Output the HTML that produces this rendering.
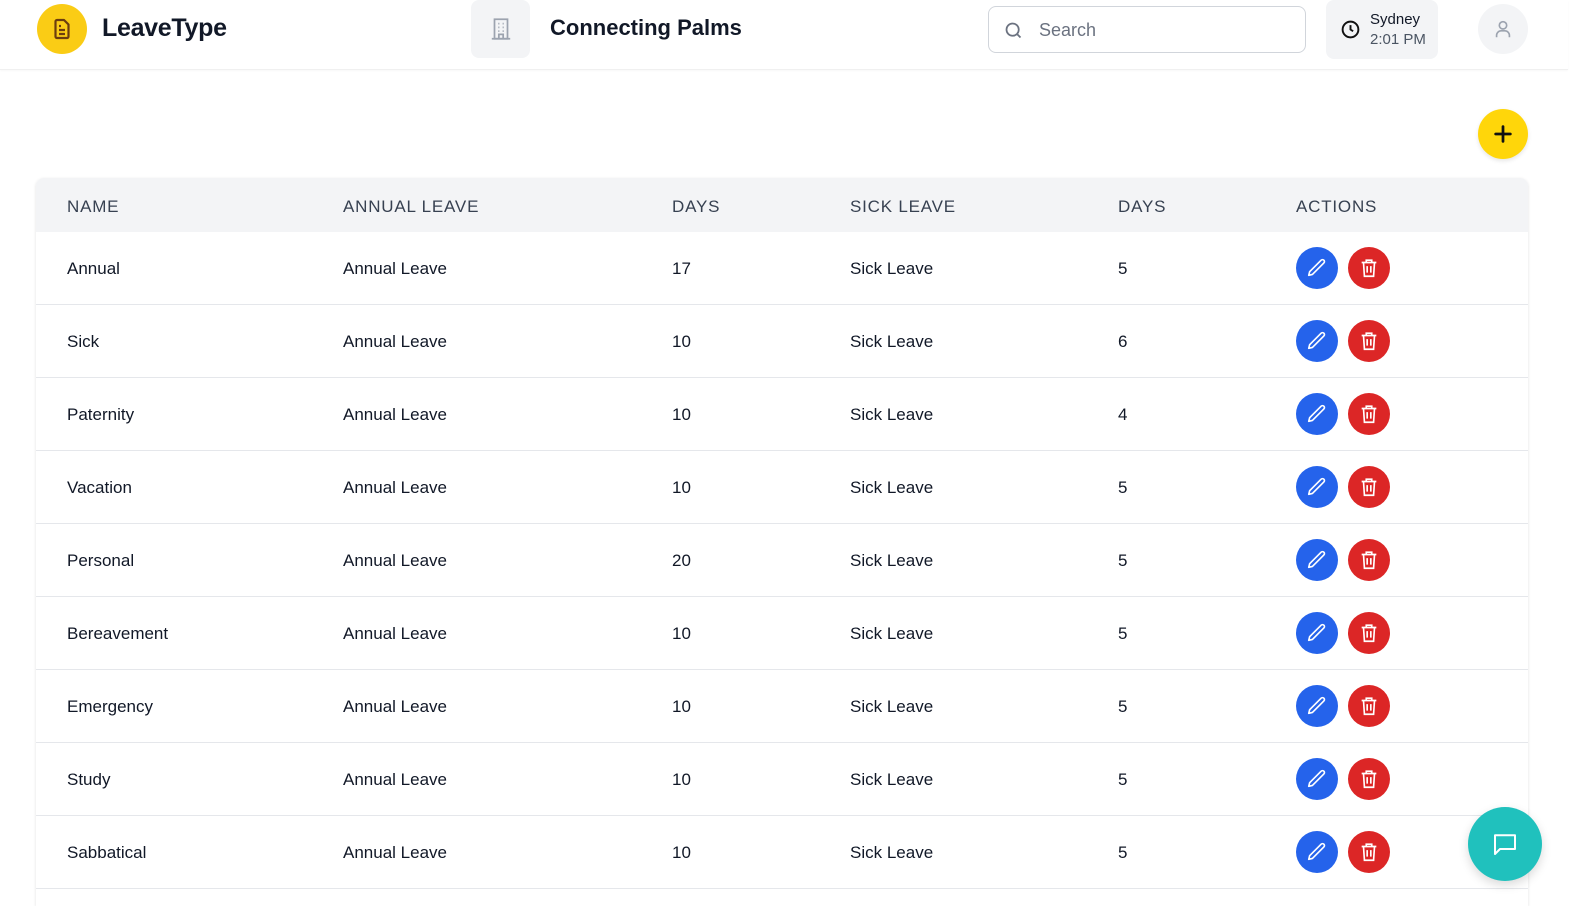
<!DOCTYPE html>
<html><head><meta charset="utf-8">
<style>
*{box-sizing:border-box;margin:0;padding:0}
html,body{width:1579px;height:906px;overflow:hidden}
body{background:#fff;font-family:"Liberation Sans",sans-serif;color:#111827;position:relative}
.top{position:absolute;left:0;top:0;width:1568px;height:70px;border-bottom:1px solid #f0f0f0;box-shadow:0 1px 2px rgba(0,0,0,.03)}
.abs{position:absolute}
.logo{left:37px;top:4px;width:50px;height:50px;border-radius:50%;background:#facc15;display:flex;align-items:center;justify-content:center}
.title{left:102px;top:14px;font-size:25px;font-weight:bold;letter-spacing:-0.3px}
.bld{left:471px;top:0;width:59px;height:58px;border-radius:8px;background:#f3f4f6;display:flex;align-items:center;justify-content:center}
.org{left:550px;top:15px;font-size:22px;font-weight:bold}
.search{left:988px;top:6px;width:318px;height:47px;border:1px solid #d1d5db;border-radius:8px}
.search span{position:absolute;left:50px;top:13px;font-size:18px;color:#6b7280}
.tz{left:1326px;top:0;width:112px;height:59px;border-radius:8px;background:#f3f4f6}
.av{left:1478px;top:4px;width:50px;height:50px;border-radius:50%;background:#f3f4f6;display:flex;align-items:center;justify-content:center}
.add{left:1478px;top:109px;width:50px;height:50px;border-radius:50%;background:#ffd60a;display:flex;align-items:center;justify-content:center;box-shadow:0 2px 4px rgba(0,0,0,.1)}
.tbl{left:36px;top:178px;width:1492px;height:728px;border-radius:8px 8px 0 0;box-shadow:0 1px 3px rgba(0,0,0,.12);overflow:hidden;background:#fff}
.hd{height:54px;background:#f3f4f6;position:relative}
.hd div{position:absolute;top:19px;font-size:17px;color:#374151;letter-spacing:.8px}
.row{height:73px;border-bottom:1px solid #e5e7eb;position:relative}
.row div.c{position:absolute;top:27px;font-size:17px;color:#111827}
.b{position:absolute;top:15px;width:42px;height:42px;border-radius:50%;display:flex;align-items:center;justify-content:center}
.e{left:1260px;background:#2563eb}
.d{left:1312px;background:#dc2626}
.chat{left:1468px;top:807px;width:74px;height:74px;border-radius:50%;background:#20c1bd;display:flex;align-items:center;justify-content:center;box-shadow:0 4px 10px rgba(0,0,0,.15)}
</style></head><body>
<div class="top">
<div class="abs logo"><svg width="24" height="24" viewBox="0 0 24 24" fill="none" stroke="#6b3d0f" stroke-width="2.2" stroke-linejoin="round"><path d="M14 3H7a1.5 1.5 0 0 0-1.5 1.5v15A1.5 1.5 0 0 0 7 21h10a1.5 1.5 0 0 0 1.5-1.5V7.5z"/><path d="M9 9h2M9 13h6M9 17h6"/></svg></div>
<div class="abs title">LeaveType</div>
<div class="abs bld"><svg width="26" height="26" viewBox="0 0 24 24" fill="none" stroke="#9ca3af" stroke-width="1.6"><rect x="6" y="3" width="12" height="18"/><path d="M3.5 21h17M10 21v-4h4v4M9.5 7h1M13.5 7h1M9.5 10.5h1M13.5 10.5h1M9.5 14h1M13.5 14h1"/></svg></div>
<div class="abs org">Connecting Palms</div>
<div class="abs search"><svg style="position:absolute;left:14px;top:13px" width="21" height="21" viewBox="0 0 24 24" fill="none" stroke="#6b7280" stroke-width="2"><circle cx="11" cy="11" r="7"/><path d="M20 20l-4-4"/></svg><span>Search</span></div>
<div class="abs tz"><svg style="position:absolute;left:14px;top:19px" width="21" height="21" viewBox="0 0 24 24" fill="none" stroke="#111" stroke-width="2.2"><circle cx="12" cy="12" r="9"/><path d="M12 7v5l3 2"/></svg><div style="position:absolute;left:44px;top:11px;font-size:15px">Sydney</div><div style="position:absolute;left:44px;top:31px;font-size:15px;color:#4b5563">2:01 PM</div></div>
<div class="abs av"><svg width="22" height="22" viewBox="0 0 24 24" fill="none" stroke="#9ca3af" stroke-width="1.8"><circle cx="12" cy="8" r="4"/><path d="M5 21v-2a5 5 0 0 1 5-5h4a5 5 0 0 1 5 5v2"/></svg></div>
</div>
<div class="abs add"><svg width="22" height="22" viewBox="0 0 24 24" stroke="#111" stroke-width="3" stroke-linecap="round"><path d="M12 4v16M4 12h16"/></svg></div>
<div class="abs tbl">
<div class="hd"><div style="left:31px">NAME</div><div style="left:307px">ANNUAL LEAVE</div><div style="left:636px">DAYS</div><div style="left:814px">SICK LEAVE</div><div style="left:1082px">DAYS</div><div style="left:1260px">ACTIONS</div></div>
<div class="row"><div class="c" style="left:31px">Annual</div><div class="c" style="left:307px">Annual Leave</div><div class="c" style="left:636px">17</div><div class="c" style="left:814px">Sick Leave</div><div class="c" style="left:1082px">5</div><div class="b e"><svg width="22" height="22" viewBox="0 0 24 24" fill="none" stroke="#fff" stroke-width="1.8" stroke-linejoin="round"><path d="M16.5 3.5a2.1 2.1 0 0 1 3 3L7 19l-4 1 1-4z"/></svg></div><div class="b d"><svg width="22" height="22" viewBox="0 0 24 24" fill="none" stroke="#fff" stroke-width="1.8"><path d="M4 6h16M9 6V3.5h6V6M6 6l1 15h10l1-15M10 10v7M14 10v7"/></svg></div></div>
<div class="row"><div class="c" style="left:31px">Sick</div><div class="c" style="left:307px">Annual Leave</div><div class="c" style="left:636px">10</div><div class="c" style="left:814px">Sick Leave</div><div class="c" style="left:1082px">6</div><div class="b e"><svg width="22" height="22" viewBox="0 0 24 24" fill="none" stroke="#fff" stroke-width="1.8" stroke-linejoin="round"><path d="M16.5 3.5a2.1 2.1 0 0 1 3 3L7 19l-4 1 1-4z"/></svg></div><div class="b d"><svg width="22" height="22" viewBox="0 0 24 24" fill="none" stroke="#fff" stroke-width="1.8"><path d="M4 6h16M9 6V3.5h6V6M6 6l1 15h10l1-15M10 10v7M14 10v7"/></svg></div></div>
<div class="row"><div class="c" style="left:31px">Paternity</div><div class="c" style="left:307px">Annual Leave</div><div class="c" style="left:636px">10</div><div class="c" style="left:814px">Sick Leave</div><div class="c" style="left:1082px">4</div><div class="b e"><svg width="22" height="22" viewBox="0 0 24 24" fill="none" stroke="#fff" stroke-width="1.8" stroke-linejoin="round"><path d="M16.5 3.5a2.1 2.1 0 0 1 3 3L7 19l-4 1 1-4z"/></svg></div><div class="b d"><svg width="22" height="22" viewBox="0 0 24 24" fill="none" stroke="#fff" stroke-width="1.8"><path d="M4 6h16M9 6V3.5h6V6M6 6l1 15h10l1-15M10 10v7M14 10v7"/></svg></div></div>
<div class="row"><div class="c" style="left:31px">Vacation</div><div class="c" style="left:307px">Annual Leave</div><div class="c" style="left:636px">10</div><div class="c" style="left:814px">Sick Leave</div><div class="c" style="left:1082px">5</div><div class="b e"><svg width="22" height="22" viewBox="0 0 24 24" fill="none" stroke="#fff" stroke-width="1.8" stroke-linejoin="round"><path d="M16.5 3.5a2.1 2.1 0 0 1 3 3L7 19l-4 1 1-4z"/></svg></div><div class="b d"><svg width="22" height="22" viewBox="0 0 24 24" fill="none" stroke="#fff" stroke-width="1.8"><path d="M4 6h16M9 6V3.5h6V6M6 6l1 15h10l1-15M10 10v7M14 10v7"/></svg></div></div>
<div class="row"><div class="c" style="left:31px">Personal</div><div class="c" style="left:307px">Annual Leave</div><div class="c" style="left:636px">20</div><div class="c" style="left:814px">Sick Leave</div><div class="c" style="left:1082px">5</div><div class="b e"><svg width="22" height="22" viewBox="0 0 24 24" fill="none" stroke="#fff" stroke-width="1.8" stroke-linejoin="round"><path d="M16.5 3.5a2.1 2.1 0 0 1 3 3L7 19l-4 1 1-4z"/></svg></div><div class="b d"><svg width="22" height="22" viewBox="0 0 24 24" fill="none" stroke="#fff" stroke-width="1.8"><path d="M4 6h16M9 6V3.5h6V6M6 6l1 15h10l1-15M10 10v7M14 10v7"/></svg></div></div>
<div class="row"><div class="c" style="left:31px">Bereavement</div><div class="c" style="left:307px">Annual Leave</div><div class="c" style="left:636px">10</div><div class="c" style="left:814px">Sick Leave</div><div class="c" style="left:1082px">5</div><div class="b e"><svg width="22" height="22" viewBox="0 0 24 24" fill="none" stroke="#fff" stroke-width="1.8" stroke-linejoin="round"><path d="M16.5 3.5a2.1 2.1 0 0 1 3 3L7 19l-4 1 1-4z"/></svg></div><div class="b d"><svg width="22" height="22" viewBox="0 0 24 24" fill="none" stroke="#fff" stroke-width="1.8"><path d="M4 6h16M9 6V3.5h6V6M6 6l1 15h10l1-15M10 10v7M14 10v7"/></svg></div></div>
<div class="row"><div class="c" style="left:31px">Emergency</div><div class="c" style="left:307px">Annual Leave</div><div class="c" style="left:636px">10</div><div class="c" style="left:814px">Sick Leave</div><div class="c" style="left:1082px">5</div><div class="b e"><svg width="22" height="22" viewBox="0 0 24 24" fill="none" stroke="#fff" stroke-width="1.8" stroke-linejoin="round"><path d="M16.5 3.5a2.1 2.1 0 0 1 3 3L7 19l-4 1 1-4z"/></svg></div><div class="b d"><svg width="22" height="22" viewBox="0 0 24 24" fill="none" stroke="#fff" stroke-width="1.8"><path d="M4 6h16M9 6V3.5h6V6M6 6l1 15h10l1-15M10 10v7M14 10v7"/></svg></div></div>
<div class="row"><div class="c" style="left:31px">Study</div><div class="c" style="left:307px">Annual Leave</div><div class="c" style="left:636px">10</div><div class="c" style="left:814px">Sick Leave</div><div class="c" style="left:1082px">5</div><div class="b e"><svg width="22" height="22" viewBox="0 0 24 24" fill="none" stroke="#fff" stroke-width="1.8" stroke-linejoin="round"><path d="M16.5 3.5a2.1 2.1 0 0 1 3 3L7 19l-4 1 1-4z"/></svg></div><div class="b d"><svg width="22" height="22" viewBox="0 0 24 24" fill="none" stroke="#fff" stroke-width="1.8"><path d="M4 6h16M9 6V3.5h6V6M6 6l1 15h10l1-15M10 10v7M14 10v7"/></svg></div></div>
<div class="row"><div class="c" style="left:31px">Sabbatical</div><div class="c" style="left:307px">Annual Leave</div><div class="c" style="left:636px">10</div><div class="c" style="left:814px">Sick Leave</div><div class="c" style="left:1082px">5</div><div class="b e"><svg width="22" height="22" viewBox="0 0 24 24" fill="none" stroke="#fff" stroke-width="1.8" stroke-linejoin="round"><path d="M16.5 3.5a2.1 2.1 0 0 1 3 3L7 19l-4 1 1-4z"/></svg></div><div class="b d"><svg width="22" height="22" viewBox="0 0 24 24" fill="none" stroke="#fff" stroke-width="1.8"><path d="M4 6h16M9 6V3.5h6V6M6 6l1 15h10l1-15M10 10v7M14 10v7"/></svg></div></div>
</div>
<div class="abs chat"><svg width="30" height="30" viewBox="0 0 24 24" fill="none" stroke="#fff" stroke-width="1.6" stroke-linejoin="round"><path d="M4 5h16v11H8l-4 4z"/></svg></div>
</body></html>
